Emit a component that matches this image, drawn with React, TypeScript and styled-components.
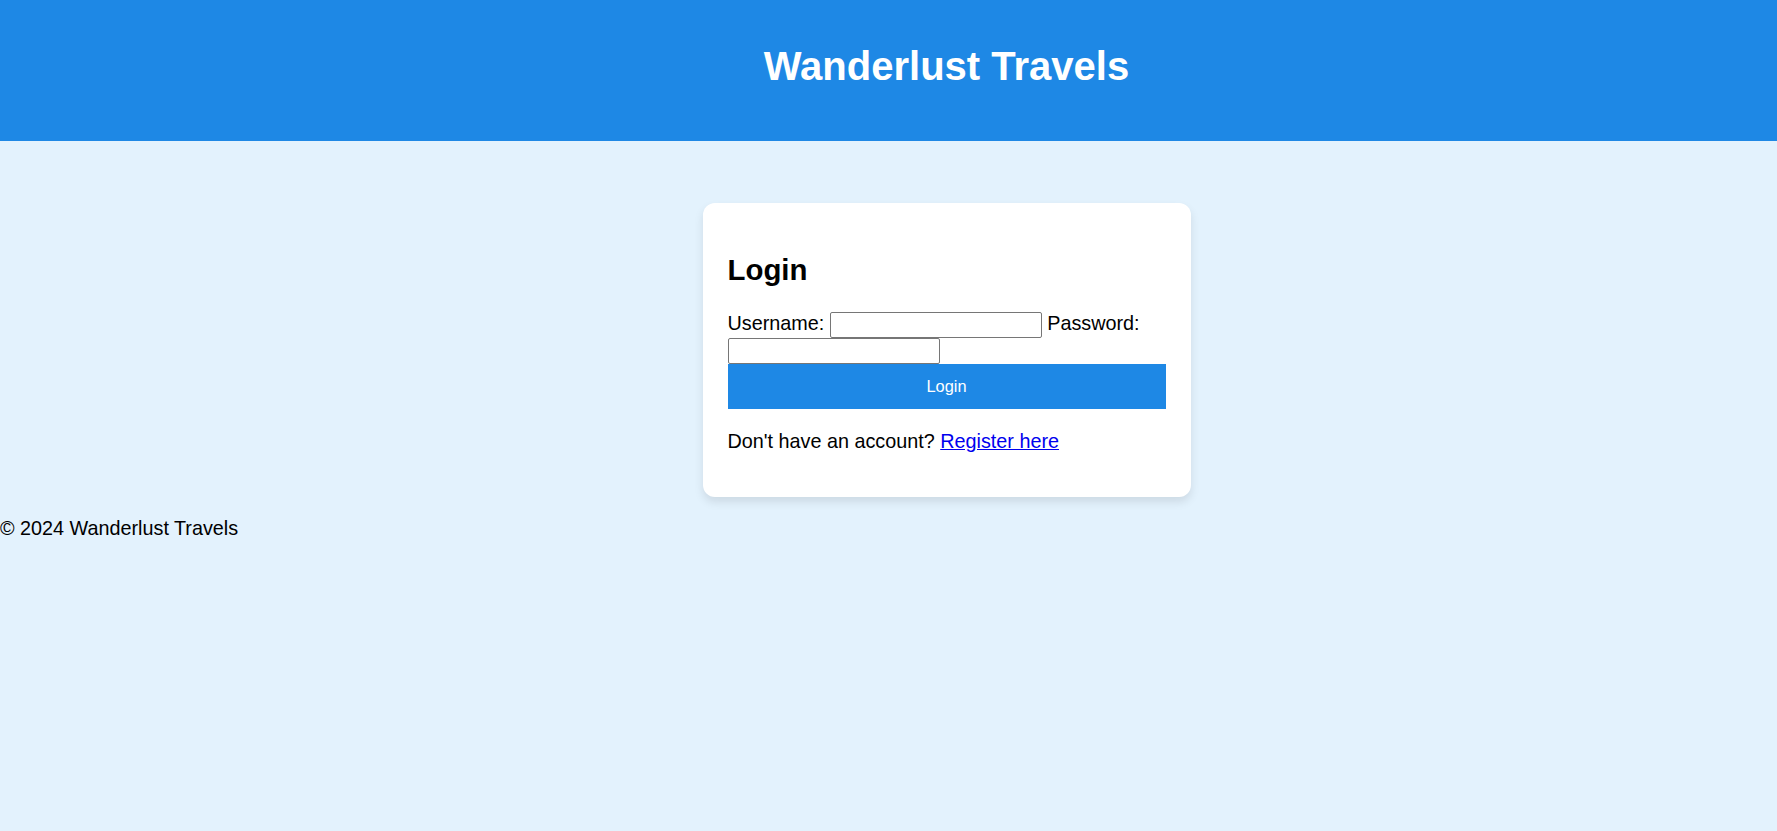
import styled, { createGlobalStyle } from 'styled-components'

const GlobalStyle = createGlobalStyle`
  body {
    margin : 0;
    background : #e3f2fd;
    font-family : "Liberation Sans", Arial, sans-serif;
    font-size : 19.8px;
    color : #000;
  }
`;

// the page content sits a little right of the window centre
const Header = styled.header`
  background : #1e88e5;
  color : white;
  text-align : center;
  padding : 44px 0 52px 116px;
`;

const Title = styled.h1`
  margin : 0;
  font-size : 40px;
  line-height : 45px;
  font-weight : bold;
`;

const Main = styled.main`
  display : flex;
  justify-content : center;
  padding : 62px 0 0 116px;
`;

const Card = styled.section`
  width : 488px;
  box-sizing : border-box;
  background : white;
  border-radius : 12px;
  padding : 28px 25px;
  box-shadow : 0 5px 10px rgba(0, 0, 0, 0.1);
`;

const CardTitle = styled.h2`
  font-size : 29.4px;
  margin : 22px 0 26px;
  line-height : 33px;
`;

const Form = styled.form`
  line-height : 22px;
`;

const Field = styled.input`
  width : 212px;
  height : 26px;
  box-sizing : border-box;
  border : 1px solid #767676;
  border-radius : 2px;
  padding : 1px 2px;
  margin : 0;
  vertical-align : ${props => props.$bottom ? 'top' : 'middle'};
  font-size : 16px;
`;

const SubmitButton = styled.button`
  display : block;
  width : 100%;
  height : 45px;
  border : none;
  background : #1e88e5;
  color : white;
  font-family : "Liberation Sans", Arial, sans-serif;
  font-size : 16.4px;
  cursor : pointer;
`;

const Note = styled.p`
  margin : 21px 0 17px;
  line-height : 22px;
  a {
    color : #0000ee;
  }
`;

const Footer = styled.footer`
  margin-top : 20px;
  line-height : 22px;
`;

export default function App() {
  return (
    <>
      <GlobalStyle />
      <Header>
        <Title>Wanderlust Travels</Title>
      </Header>

      <Main>
        <Card>
          <CardTitle>Login</CardTitle>
          <Form onSubmit={e => e.preventDefault()}>
            Username: <Field type="text" /> Password: <Field type="password" $bottom />
            <SubmitButton type="submit">Login</SubmitButton>
          </Form>
          <Note>
            Don't have an account? <a href="#">Register here</a>
          </Note>
        </Card>
      </Main>

      <Footer>© 2024 Wanderlust Travels</Footer>
    </>
  )
}
